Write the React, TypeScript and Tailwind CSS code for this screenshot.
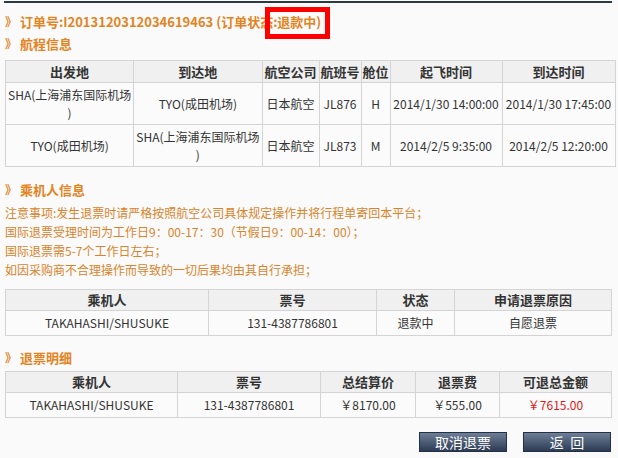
import React from "react";

const font = "font-['Noto_Sans_CJK_SC',_'Noto_Sans',_sans-serif]";

type Cell = string | React.ReactNode;

function Heading({ children, className = "" }: { children: React.ReactNode; className?: string }) {
  return (
    <div className={`flex h-[20px] items-center pl-[5px] text-[13px] font-bold leading-[20px] text-[#e3841f] ${className}`}>
      <span className="mr-[3px] text-[12px]">》</span>
      {children}
    </div>
  );
}

function DataTable({
  widths,
  head,
  rows,
  headH,
  rowH,
  className = "",
}: {
  widths: number[];
  head: string[];
  rows: Cell[][];
  headH: string;
  rowH: string;
  className?: string;
}) {
  return (
    <table className={`ml-[5px] table-fixed border-collapse text-[#333] ${className}`}>
      <colgroup>
        {widths.map((w, i) => (
          <col key={i} style={{ width: w }} />
        ))}
      </colgroup>
      <thead>
        <tr className={`${headH} bg-[#f0f0f0]`}>
          {head.map((h) => (
            <th key={h} className="border border-[#d4d4d4] p-0 text-center text-[13px] font-bold leading-[16px]">
              {h}
            </th>
          ))}
        </tr>
      </thead>
      <tbody>
        {rows.map((r, i) => (
          <tr key={i} className={`${rowH} bg-[#fbfbfb]`}>
            {r.map((c, j) => (
              <td key={j} className="border border-[#d4d4d4] px-[2px] py-0 text-center text-[12px] leading-[18px]">
                {c}
              </td>
            ))}
          </tr>
        ))}
      </tbody>
    </table>
  );
}

const sha = (
  <>
    <span className="whitespace-nowrap">SHA(上海浦东国际机场</span>
    <br />)
  </>
);

const notices = [
  "注意事项:发生退票时请严格按照航空公司具体规定操作并将行程单寄回本平台；",
  "国际退票受理时间为工作日9：00-17：30（节假日9：00-14：00）；",
  "国际退票需5-7个工作日左右；",
  "如因采购商不合理操作而导致的一切后果均由其自行承担；",
];

export default function App() {
  return (
    <div className={`relative h-[458px] w-[618px] overflow-hidden bg-[#fafafa] ${font}`}>
      <div className="ml-[4px] mt-px h-[2px] w-[608px] bg-[#2c3a44]" />

      <Heading className="mt-[9px]">
        订单号:I2013120312034619463 (订单状态:退款中)
      </Heading>
      <Heading className="mt-[2px]">航程信息</Heading>

      <DataTable
        className="mt-[6px]"
        widths={[128, 126, 57, 42, 29, 112, 113]}
        head={["出发地", "到达地", "航空公司", "航班号", "舱位", "起飞时间", "到达时间"]}
        headH="h-[22px]"
        rowH="h-[42px]"
        rows={[
          [
            sha,
            "TYO(成田机场)",
            "日本航空",
            "JL876",
            "H",
            <span className="whitespace-nowrap">2014/1/30 14:00:00</span>,
            <span className="whitespace-nowrap">2014/1/30 17:45:00</span>,
          ],
          [
            "TYO(成田机场)",
            sha,
            "日本航空",
            "JL873",
            "M",
            <span className="whitespace-nowrap">2014/2/5 9:35:00</span>,
            <span className="whitespace-nowrap">2014/2/5 12:20:00</span>,
          ],
        ]}
      />

      <Heading className="mt-[13px]">乘机人信息</Heading>
      <div className="mt-[3px] pl-[5px] text-[12px] text-[#d9842c]">
        {notices.map((n) => (
          <p key={n} className="h-[19px] leading-[19px] whitespace-nowrap">
            {n}
          </p>
        ))}
      </div>

      <DataTable
        className="mt-[10px]"
        widths={[203, 168, 78, 157]}
        head={["乘机人", "票号", "状态", "申请退票原因"]}
        headH="h-[21px]"
        rowH="h-[25px]"
        rows={[["TAKAHASHI/SHUSUKE", "131-4387786801", "退款中", "自愿退票"]]}
      />

      <Heading className="mt-[12px]">退票明细</Heading>
      <DataTable
        className="mt-[3px]"
        widths={[172, 143, 95, 84, 112]}
        head={["乘机人", "票号", "总结算价", "退票费", "可退总金额"]}
        headH="h-[21px]"
        rowH="h-[25px]"
        rows={[
          [
            "TAKAHASHI/SHUSUKE",
            "131-4387786801",
            "￥8170.00",
            "￥555.00",
            <span className="text-[#e01818]">￥7615.00</span>,
          ],
        ]}
      />

      <div className="mt-[14px] flex justify-end gap-[16px] pr-[7px]">
        <button className="h-[20px] w-[88px] border border-[#243045] bg-gradient-to-b from-[#6f7f98] to-[#2d3c54] text-[14px] leading-[18px] text-white">
          取消退票
        </button>
        <button className="h-[20px] w-[88px] border border-[#243045] bg-gradient-to-b from-[#6f7f98] to-[#2d3c54] text-[14px] leading-[18px] text-white">
          返&nbsp;&nbsp;回
        </button>
      </div>

      <div className="absolute left-[265px] top-[7px] h-[32px] w-[65px] border-[5px] border-[#ff0000]" />
    </div>
  );
}
